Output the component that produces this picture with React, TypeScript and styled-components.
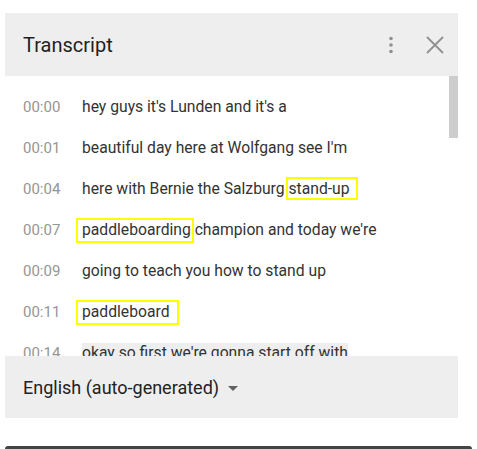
import React from 'react';
import styled, { createGlobalStyle } from 'styled-components';

const GlobalStyle = createGlobalStyle`
  html, body {
    margin: 0;
    padding: 0;
    background: #ffffff;
    font-family: Roboto, 'Liberation Sans', Arial, sans-serif;
  }
`;

const Page = styled.div`
  padding: 13px 0 0 5px;
  height: 449px;
  box-sizing: border-box;
  overflow: hidden;
`;

const Panel = styled.section`
  width: 453px;
  display: flex;
  flex-direction: column;
`;

const Header = styled.header`
  height: 63px;
  background: #eeeeee;
  display: flex;
  align-items: center;
  padding: 0 14px 0 18px;
`;

const Title = styled.h2`
  flex: 1;
  margin: 0;
  font-size: 20px;
  font-weight: 400;
  color: #1f1f1f;
`;

const IconButton = styled.button<{ gap: number }>`
  border: 0;
  background: none;
  padding: 0;
  margin-left: ${({ gap }) => gap}px;
  display: flex;
  align-items: center;
  justify-content: center;
  cursor: pointer;
`;

const Body = styled.div`
  position: relative;
  height: 280px;
  overflow: hidden;
  padding-top: 10px;
  box-sizing: border-box;
`;

const ScrollThumb = styled.div`
  position: absolute;
  top: 0;
  right: 0;
  width: 9px;
  height: 62px;
  background: #cdcdcd;
`;

const Row = styled.div`
  display: flex;
  align-items: center;
  height: 41px;
  padding-left: 18px;
`;

const Time = styled.span`
  width: 59px;
  flex: none;
  font-size: 15px;
  color: #959595;
`;

const Line = styled.span<{ active?: boolean }>`
  font-size: 15.7px;
  color: #333333;
  white-space: nowrap;
  background: ${({ active }) => (active ? '#eeeeee' : 'transparent')};
`;

const Word = styled.span`
  position: relative;
`;

const Box = styled.span<{ l: number; r: number; t: number; b: number }>`
  position: absolute;
  left: ${({ l }) => l}px;
  right: ${({ r }) => r}px;
  top: ${({ t }) => t}px;
  bottom: ${({ b }) => b}px;
  border: 2px solid #ffff00;
  pointer-events: none;
`;

const Footer = styled.footer`
  height: 62px;
  background: #eeeeee;
  display: flex;
  align-items: center;
  padding-left: 18px;
  font-size: 18px;
  color: #222222;
  gap: 9px;
`;

const Caret = styled.span`
  width: 0;
  height: 0;
  border-left: 5px solid transparent;
  border-right: 5px solid transparent;
  border-top: 5px solid #606060;
  margin-top: 2px;
`;

const BottomBar = styled.div`
  margin-top: 28px;
  width: 467px;
  height: 6px;
  background: #444444;
  border-radius: 3px 3px 0 0;
`;

type Mark = { word: string; l: number; r: number; t: number; b: number };

type Entry = {
  time: string;
  before?: string;
  mark?: Mark;
  after?: string;
  active?: boolean;
};

const entries: Entry[] = [
  { time: '00:00', before: "hey guys it's Lunden and it's a" },
  { time: '00:01', before: "beautiful day here at Wolfgang see I'm" },
  {
    time: '00:04',
    before: 'here with Bernie the Salzburg ',
    mark: { word: 'stand-up', l: -2, r: -8, t: -2, b: -2 },
  },
  {
    time: '00:07',
    mark: { word: 'paddleboarding', l: -6, r: -3, t: -2, b: -4 },
    after: " champion and today we're",
  },
  { time: '00:09', before: 'going to teach you how to stand up' },
  {
    time: '00:11',
    mark: { word: 'paddleboard', l: -6, r: -10, t: -2, b: -4 },
  },
  { time: '00:14', before: "okay so first we're gonna start off with", active: true },
];

const MoreIcon = () => (
  <svg width="6" height="18" viewBox="0 0 6 18">
    <circle cx="3" cy="2.5" r="1.8" fill="#909090" />
    <circle cx="3" cy="9" r="1.8" fill="#909090" />
    <circle cx="3" cy="15.5" r="1.8" fill="#909090" />
  </svg>
);

const CloseIcon = () => (
  <svg width="18" height="18" viewBox="0 0 18 18">
    <path d="M1 1 L17 17 M17 1 L1 17" stroke="#909090" strokeWidth="1.8" fill="none" />
  </svg>
);

const App: React.FC = () => (
  <Page>
    <GlobalStyle />
    <Panel>
      <Header>
        <Title>Transcript</Title>
        <IconButton gap={0}>
          <MoreIcon />
        </IconButton>
        <IconButton gap={32}>
          <CloseIcon />
        </IconButton>
      </Header>
      <Body>
        <ScrollThumb />
        {entries.map((e) => (
          <Row key={e.time}>
            <Time>{e.time}</Time>
            <Line active={e.active}>
              {e.before}
              {e.mark && (
                <Word>
                  {e.mark.word}
                  <Box l={e.mark.l} r={e.mark.r} t={e.mark.t} b={e.mark.b} />
                </Word>
              )}
              {e.after}
            </Line>
          </Row>
        ))}
      </Body>
      <Footer>
        English (auto-generated)
        <Caret />
      </Footer>
    </Panel>
    <BottomBar />
  </Page>
);

export default App;
